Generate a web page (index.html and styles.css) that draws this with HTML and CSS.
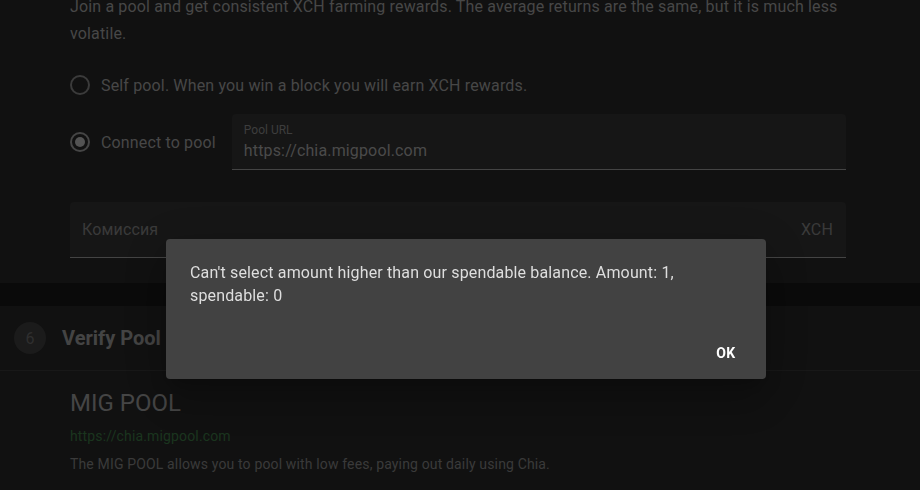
FILE: index.html
```html
<!DOCTYPE html>
<html>
<head>
  <title>Join a Pool</title>
  <link rel="stylesheet" href="styles.css">
</head>
<body>

  <div class="page">
    <section class="card card-top">
      <p class="intro">Join a pool and get consistent XCH farming rewards. The average returns are the same, but it is much less volatile.</p>

      <div class="radio-row">
        <span class="radio"></span>
        <span class="radio-label">Self pool. When you win a block you will earn XCH rewards.</span>
      </div>

      <div class="radio-row radio-row-field">
        <span class="radio checked"></span>
        <span class="radio-label">Connect to pool</span>
        <div class="field field-url">
          <label class="field-label">Pool URL</label>
          <div class="field-value">https://chia.migpool.com</div>
        </div>
      </div>

      <div class="field field-fee">
        <span class="placeholder">Комиссия</span>
        <span class="unit">XCH</span>
      </div>
    </section>

    <section class="card card-step">
      <div class="step-head">
        <span class="step-num">6</span>
        <h3>Verify Pool</h3>
      </div>
      <div class="step-body">
        <h2>MIG POOL</h2>
        <a class="pool-link" href="#">https://chia.migpool.com</a>
        <p>The MIG POOL allows you to pool with low fees, paying out daily using Chia.</p>
      </div>
    </section>
  </div>

  <div class="backdrop">
    <div class="dialog">
      <p class="dialog-text">Can't select amount higher than our spendable balance. Amount: 1, spendable: 0</p>
      <div class="dialog-actions">
        <button type="button" class="btn-ok">OK</button>
      </div>
    </div>
  </div>

</body>
</html>
```

FILE: styles.css
```css
body {
  margin: 0;
  padding: 0;
  background: #151515;
  font-family: Roboto, "Liberation Sans", sans-serif;
  letter-spacing: 0.15px;
  overflow: hidden;
  height: 490px;
}

.card {
  background: #222222;
}

.card-top {
  padding: 0 74px 25px 70px;
}

.intro {
  margin: -7px 0 17px;
  font-size: 16px;
  line-height: 27px;
  color: #8e8e8e;
}

.radio-row {
  display: flex;
  align-items: center;
  height: 42px;
}

.radio-row-field {
  height: 56px;
  margin-top: 8px;
}

.radio {
  width: 20px;
  height: 20px;
  box-sizing: border-box;
  border: 2px solid #767676;
  border-radius: 50%;
  flex-shrink: 0;
  display: flex;
  align-items: center;
  justify-content: center;
}

.radio.checked {
  border-color: #8a8a8a;
}

.radio.checked::after {
  content: "";
  width: 10px;
  height: 10px;
  border-radius: 50%;
  background: #a6a6a6;
}

.radio-label {
  margin-left: 11px;
  font-size: 16px;
  color: #8e8e8e;
}

.field {
  background: #2c2c2c;
  border-bottom: 1px solid #888;
  border-radius: 4px 4px 0 0;
  box-sizing: border-box;
  height: 56px;
}

.field-url {
  flex: 1;
  margin-left: 16px;
  padding: 9px 12px 0;
}

.field-label {
  display: block;
  font-size: 12px;
  line-height: 14px;
  letter-spacing: 0;
  color: #7a7a7a;
}

.field-value {
  margin-top: 4px;
  font-size: 16px;
  line-height: 19px;
  color: #949494;
}

.field-fee {
  margin-top: 32px;
  display: flex;
  align-items: center;
  justify-content: space-between;
  padding: 0 13px 0 12px;
  font-size: 16px;
}

.field-fee .placeholder {
  color: #747474;
}

.field-fee .unit {
  color: #747474;
}

.card-step {
  margin-top: 23px;
  height: 200px;
}

.step-head {
  display: flex;
  align-items: center;
  height: 65px;
  padding-left: 14px;
  border-bottom: 1px solid #303030;
  box-sizing: border-box;
}

.step-num {
  width: 32px;
  height: 32px;
  border-radius: 50%;
  background: #363636;
  color: #5e5e5e;
  font-size: 16px;
  display: flex;
  align-items: center;
  justify-content: center;
}

.step-head h3 {
  margin: 0 0 0 16px;
  font-size: 20px;
  font-weight: 700;
  letter-spacing: 0;
  color: #888;
}

.step-body {
  padding: 16px 70px;
}

.step-body h2 {
  margin: 0;
  font-size: 24px;
  font-weight: 400;
  line-height: 32px;
  letter-spacing: 0;
  color: #8a8a8a;
}

.pool-link {
  display: block;
  margin-top: 7px;
  font-size: 14px;
  line-height: 20px;
  color: #356a3d;
  text-decoration: none;
}

.step-body p {
  margin: 8px 0 0;
  font-size: 14px;
  line-height: 20px;
  color: #747474;
}

/* modal */
.backdrop {
  position: fixed;
  inset: 0;
  background: rgba(0, 0, 0, 0.5);
  padding: 239px 0 0 166px;
}

.dialog {
  width: 600px;
  height: 140px;
  box-sizing: border-box;
  background: #424242;
  border-radius: 4px;
  box-shadow: 0 11px 15px -7px rgba(0, 0, 0, 0.2), 0 24px 38px 3px rgba(0, 0, 0, 0.14), 0 9px 46px 8px rgba(0, 0, 0, 0.12);
  display: flex;
  flex-direction: column;
}

.dialog-text {
  margin: 0;
  padding: 22px 24px 0;
  font-size: 16px;
  line-height: 23px;
  color: #dedede;
}

.dialog-actions {
  margin-top: auto;
  display: flex;
  justify-content: flex-end;
  padding: 8px;
}

.btn-ok {
  min-width: 64px;
  height: 36px;
  padding: 6px 8px;
  background: none;
  border: none;
  color: #fff;
  font-family: Roboto, "Liberation Sans", sans-serif;
  font-size: 14px;
  font-weight: 700;
  letter-spacing: 0.4px;
  text-transform: uppercase;
  cursor: pointer;
}
```
